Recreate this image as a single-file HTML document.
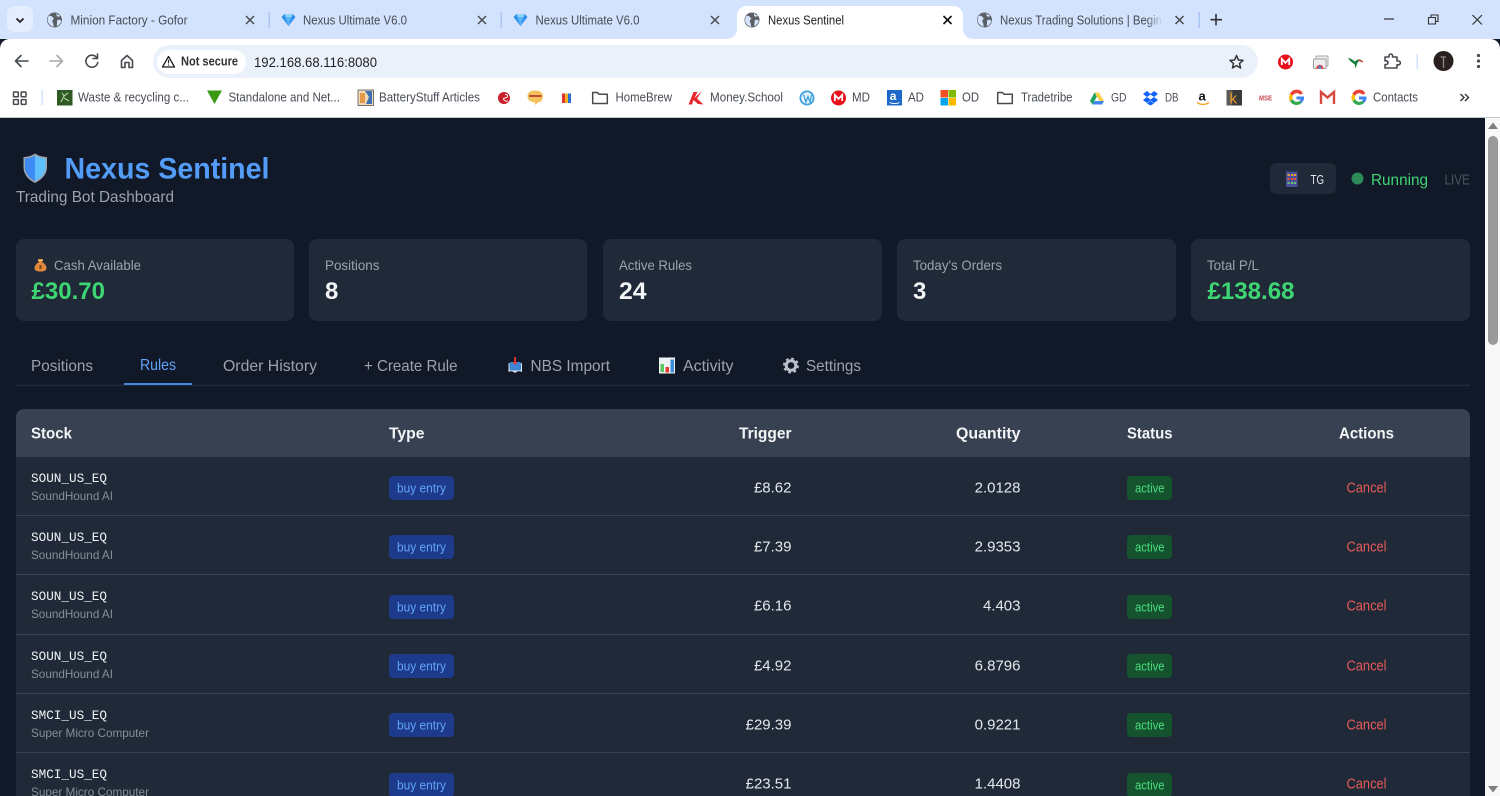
<!DOCTYPE html>
<html lang="en">
<head>
<meta charset="utf-8">
<title>Nexus Sentinel</title>
<style>
html,body{margin:0;padding:0;width:1500px;height:796px;overflow:hidden;background:#111827}
svg{display:block;position:absolute;left:0;top:0}
text{font-family:"Liberation Sans",Arial,sans-serif;white-space:pre}
.t{font-size:12.5px;fill:#474c55}
.b{font-size:12.5px;fill:#474c55}
.sm{font-size:11.5px}
.h{font-size:16px;font-weight:700;fill:#f3f4f6}
.l{font-size:14px;fill:#9ca3af}
.v{font-size:24px;font-weight:700;fill:#f3f4f6}
.g{fill:#3dd673}
.n{font-size:16px;fill:#9ca3af}
.m{font-family:"Liberation Mono",monospace;font-size:13px;fill:#f3f4f6}
.s{font-size:12px;fill:#868e9b}
.bd{font-size:12.5px;fill:#60a5fa}
.ac{font-size:12.5px;fill:#4ade80}
.num{font-size:15px;fill:#e5e7eb}
.c{font-size:15px;fill:#e85a5a}
.i{fill:none;stroke:#474a4f;stroke-width:1.6;stroke-linecap:round;stroke-linejoin:round}
</style>
</head>
<body>
<svg width="1500" height="796" viewBox="0 0 1500 796" xmlns="http://www.w3.org/2000/svg">
<defs>
<linearGradient id="fade" x1="0" x2="1" y1="0" y2="0"><stop offset="0" stop-color="#d3e3fd" stop-opacity="0"/><stop offset="1" stop-color="#d3e3fd"/></linearGradient>
<g id="globe"><circle r="7.500" fill="#5b5f66"/><path d="M-6-4C-3-5-2-3-1-2S-3 0-2 2-1 4-1 7C-4 6-7 3-7 0ZM2-7C3-5 5-5 6-4 4-3 2-3 2-5ZM3 0C5-1 6 0 7 1 6 4 4 6 2 6 3 4 2 2 3 0Z" fill="#d3e3fd"/></g>
<g id="diamond"><path d="M-7-3-4-6H4L7-3 0 6Z" fill="#2f8fea"/><path d="M-3-3H3L0 6Z" fill="#5db6f7"/><path d="M-4-6-3-3H3L4-6Z" fill="#8fd2fb"/></g>
<g id="folder"><path d="M-7.300-5.500H-2.500L-.8-3.700H7.300V5.500H-7.300Z" fill="none" stroke="#474a4f" stroke-width="1.500" stroke-linejoin="round"/></g>
<g id="gg"><path d="M6.500-4.300A7.500 7.500 0 0 0-6.500-3.800L-3.800-1.800A4.500 4.500 0 0 1 3.700-2.700Z" fill="#ea4335"/><path d="M-6.500-3.800A7.500 7.500 0 0 0-6.500 3.800L-3.800 1.800A4.500 4.500 0 0 1-3.800-1.800Z" fill="#fbbc05"/><path d="M-6.500 3.800A7.500 7.500 0 0 0 5.200 5.400L2.800 3.500A4.500 4.500 0 0 1-3.800 1.800Z" fill="#34a853"/><path d="M7.500-1H0V2H4.200A4.500 4.500 0 0 1 2.800 3.500L5.200 5.400A7.500 7.500 0 0 0 7.500-1Z" fill="#4285f4"/></g>
<g id="mega"><circle r="7.500" fill="#e8101a"/><path d="M-3.700 3V-3L0 .8 3.700-3V3" fill="none" stroke="#fff" stroke-width="1.800"/></g>
</defs>

<!-- Tab strip -->
<rect width="1500" height="39" fill="#d3e3fd"/>
<rect x="7" y="6" width="26" height="26" rx="8" fill="#e4edfd"/>
<path d="M16.500 18.500 20 22 23.500 18.500" fill="none" stroke="#1f1f1f" stroke-width="1.700"/>
<use href="#globe" x="54.500" y="20"/>
<text class="t" x="70.500" y="24.500" textLength="117" lengthAdjust="spacingAndGlyphs">Minion Factory - Gofor</text>
<path d="M246 16 254 24M254 16 246 24" stroke="#474a4f" stroke-width="1.500"/>
<rect x="268.500" y="12" width="1.500" height="16" fill="#a9c5f1"/>
<use href="#diamond" x="288.500" y="20"/>
<text class="t" x="303" y="24.500" textLength="104" lengthAdjust="spacingAndGlyphs">Nexus Ultimate V6.0</text>
<path d="M478 16 486 24M486 16 478 24" stroke="#474a4f" stroke-width="1.500"/>
<rect x="500.500" y="12" width="1.500" height="16" fill="#a9c5f1"/>
<use href="#diamond" x="520.500" y="20"/>
<text class="t" x="535.500" y="24.500" textLength="104" lengthAdjust="spacingAndGlyphs">Nexus Ultimate V6.0</text>
<path d="M711 16 719 24M719 16 711 24" stroke="#474a4f" stroke-width="1.500"/>
<path d="M725 39C732 39 737 36 737 28V16C737 10 741 6 747 6H953C959 6 963 10 963 16V28C963 36 968 39 975 39Z" fill="#fff"/>
<use href="#globe" x="752" y="20"/>
<text class="t" style="fill:#1f1f1f" x="768" y="24.500" textLength="76" lengthAdjust="spacingAndGlyphs">Nexus Sentinel</text>
<path d="M943.500 16 951.500 24M951.500 16 943.500 24" stroke="#111" stroke-width="1.600"/>
<use href="#globe" x="984.500" y="20"/>
<text class="t" x="1000" y="24.500" textLength="162" lengthAdjust="spacingAndGlyphs">Nexus Trading Solutions | Begin</text>
<rect x="1146" y="12" width="17" height="16" fill="url(#fade)"/>
<path d="M1175.500 16 1183.500 24M1183.500 16 1175.500 24" stroke="#474a4f" stroke-width="1.500"/>
<rect x="1198.500" y="12" width="1.500" height="16" fill="#a9c5f1"/>
<path d="M1216 14V25.500M1210.500 19.700H1222" stroke="#333" stroke-width="1.600"/>
<path d="M1384 19H1394" stroke="#333" stroke-width="1.200"/>
<path d="M1428.500 17.500H1435.500V24H1428.500ZM1431 17.500V15H1438V21.500H1435.500" fill="none" stroke="#333" stroke-width="1.100"/>
<path d="M1472.500 15 1482 24.500M1482 15 1472.500 24.500" stroke="#333" stroke-width="1.200"/>

<!-- Toolbar -->
<path d="M0 117V49C0 43 4 39 10 39H1490C1496 39 1500 43 1500 49V117Z" fill="#fff"/>
<path d="M28 61H15.500M21 55.500 15.500 61 21 66.500" class="i"/>
<path d="M50 61H62.500M57 55.500 62.500 61 57 66.500" class="i" style="stroke:#a7a9ad"/>
<path d="M97 58A6 6 0 1 0 97.800 62.500M97.500 54V58.500H93" class="i"/>
<path d="M121.500 60.500 127 55.500 132.500 60.500V67.500H129V62.500H125V67.500H121.500Z" class="i"/>
<rect x="153" y="45" width="1105" height="33" rx="16.500" fill="#ebf1fb"/>
<rect x="157" y="50" width="89" height="24" rx="12" fill="#fff"/>
<path d="M168.500 56.500 174.500 67H162.500Z" fill="none" stroke="#1f1f1f" stroke-width="1.300" stroke-linejoin="round"/>
<path d="M168.500 59.800V63.400M168.500 64.500V65.600" stroke="#1f1f1f" stroke-width="1.100"/>
<text x="181" y="65.500" textLength="57" lengthAdjust="spacingAndGlyphs" style="font-size:12.500px;font-weight:700;fill:#303236">Not secure</text>
<text x="254" y="66.800" textLength="123" lengthAdjust="spacingAndGlyphs" style="font-size:14px;fill:#1f1f1f">192.168.68.116:8080</text>
<path d="M1236.500 55.500 1238.400 60 1243 60.400 1239.500 63.400 1240.600 68 1236.500 65.600 1232.400 68 1233.500 63.400 1230 60.400 1234.600 60Z" fill="none" stroke="#333" stroke-width="1.500" stroke-linejoin="round"/>
<use href="#mega" x="1285.500" y="62"/>
<rect x="1316" y="56" width="12" height="10" rx="1" fill="#eee" stroke="#a7a7a7"/>
<rect x="1313.500" y="59" width="12.500" height="9.500" rx="1" fill="#eee" stroke="#9c9c9c"/>
<path d="M1316 68.500A3.800 3.800 0 0 1 1323.600 68.500Z" fill="#ea4335"/><circle cx="1319.800" cy="67" r="1.500" fill="#4285f4"/>
<path d="M1348 57.500C1352 59 1354 61 1355 61.500 1357 59.500 1359 58.500 1362.500 60.500 1359 60.500 1357.500 62 1357 64L1355.500 68.500 1354.500 64C1352 63 1350 61 1348 57.500Z" fill="#15803d"/><path d="M1358 60 1363 62" stroke="#d33" stroke-width="1.200"/>
<path d="M1385 57H1389V55.800A1.800 1.800 0 0 1 1392.600 55.800V57H1397V61H1398.500A1.900 1.900 0 0 1 1398.500 64.800H1397V68H1385V64.500H1386.500A1.900 1.900 0 0 0 1386.500 60.800H1385Z" fill="none" stroke="#474a4f" stroke-width="1.600" stroke-linejoin="round"/>
<rect x="1416.500" y="54" width="1.500" height="15" fill="#d3e3fd"/>
<circle cx="1443.500" cy="61" r="10" fill="#29211f"/>
<path d="M1440.500 57H1446M1443.500 57V68" stroke="#8f8a86" stroke-width="1.300"/>
<circle cx="1478.500" cy="55.500" r="1.600" fill="#474a4f"/><circle cx="1478.500" cy="61" r="1.600" fill="#474a4f"/><circle cx="1478.500" cy="66.500" r="1.600" fill="#474a4f"/>

<!-- Bookmarks -->
<rect y="117" width="1500" height="1" fill="#c4c7c9"/>
<g fill="none" stroke="#474a4f" stroke-width="1.500"><rect x="13.500" y="92" width="4.800" height="4.800" rx=".6"/><rect x="21.200" y="92" width="4.800" height="4.800" rx=".6"/><rect x="13.500" y="99.600" width="4.800" height="4.800" rx=".6"/><rect x="21.200" y="99.600" width="4.800" height="4.800" rx=".6"/></g>
<rect x="41.500" y="90" width="1.500" height="15" fill="#d3e3fd"/>
<rect x="57" y="90" width="15.500" height="15.500" fill="#2e5a23"/><path d="M61 102 64 96 62 93M64 96 68 93M64 98 69 101" stroke="#b8d0a8" stroke-width="1.100" fill="none"/>
<text class="b" x="78" y="101.500" textLength="111" lengthAdjust="spacingAndGlyphs">Waste &amp; recycling c...</text>
<path d="M207 90.500H222L214.500 104Z" fill="#3a9b13"/>
<text class="b" x="228.500" y="101.500" textLength="111.500" lengthAdjust="spacingAndGlyphs">Standalone and Net...</text>
<rect x="358" y="90" width="15.500" height="15.500" fill="#f4d9b6" stroke="#555" stroke-width=".8"/><path d="M365 91 369 97 366 104H372V91Z" fill="#3f6fb5"/><path d="M360 93H365V103H360Z" fill="#e39a4a"/>
<text class="b" x="379" y="101.500" textLength="101" lengthAdjust="spacingAndGlyphs">BatteryStuff Articles</text>
<circle cx="504" cy="98" r="6" fill="#c9202c"/><path d="M505 94.500C509 94 508 98 505 98S504 102 508 101" stroke="#fff" stroke-width="1" fill="none"/>
<path d="M527.500 96C527.500 92 531 90.500 535 90.500S543 92 543 96 541 102 538 102.500L535 105 535 102.500C530 102 527.500 100 527.500 96Z" fill="#f5c25e"/><path d="M529 96H541.500" stroke="#b2402f" stroke-width="1.800"/>
<rect x="562" y="93.500" width="3" height="9.500" fill="#e0352b"/><rect x="565" y="93.500" width="3" height="9.500" fill="#f0b429"/><rect x="568" y="93.500" width="3" height="9.500" fill="#2a70d9"/>
<use href="#folder" x="600" y="98"/>
<text class="b" x="615.500" y="101.500" textLength="56.500" lengthAdjust="spacingAndGlyphs">HomeBrew</text>
<path d="M688.500 104.500 693.500 92 697.500 92 694.500 98 702 91 697 98.500 703.500 104.500 698 104 693.500 100 692 104.500Z" fill="#e6282c"/>
<text class="b" x="710" y="101.500" textLength="73" lengthAdjust="spacingAndGlyphs">Money.School</text>
<circle cx="807" cy="98" r="7.500" fill="#3ba1dc"/><circle cx="807" cy="98" r="5.700" fill="#e8f4fb"/><path d="M803.500 94.500 806 102 808 96.500 810 102 811.500 95" fill="none" stroke="#3ba1dc" stroke-width="1.300"/>
<use href="#mega" x="838.500" y="98"/>
<text class="b" x="852" y="101.500" textLength="18" lengthAdjust="spacingAndGlyphs">MD</text>
<rect x="887" y="90" width="15" height="15.500" fill="#1d68c8"/><text x="889.800" y="100" style="font-size:12px;font-weight:700;fill:#fff">a</text><path d="M889.500 102.500C892 104 897 104 899.500 102.500" stroke="#fff" fill="none"/>
<text class="b" x="908" y="101.500" textLength="16" lengthAdjust="spacingAndGlyphs">AD</text>
<rect x="940.500" y="90" width="7.500" height="7.500" fill="#f25022"/><rect x="948.500" y="90" width="7.500" height="7.500" fill="#7fba00"/><rect x="940.500" y="98" width="7.500" height="7.500" fill="#00a4ef"/><rect x="948.500" y="98" width="7.500" height="7.500" fill="#ffb900"/>
<text class="b" x="962" y="101.500" textLength="17" lengthAdjust="spacingAndGlyphs">OD</text>
<use href="#folder" x="1005" y="98"/>
<text class="b" x="1021" y="101.500" textLength="51.500" lengthAdjust="spacingAndGlyphs">Tradetribe</text>
<path d="M1090 101 1094.500 92.500H1099L1094.500 101 1092.500 104.500Z" fill="#1fa463"/><path d="M1094.500 92.500H1099L1104 101H1099.500Z" fill="#ffd04b"/><path d="M1092.500 104.500 1094.500 101H1104L1102 104.500Z" fill="#4285f4"/>
<text class="b sm" x="1111" y="101.500" textLength="15.500" lengthAdjust="spacingAndGlyphs">GD</text>
<path d="M1147 91 1143 94 1147 97 1143 100 1147 103 1150.500 100.500 1154 103 1158 100 1154 97 1158 94 1154 91 1150.500 94 Z" fill="#0f62fe"/><path d="M1147 97 1150.500 94.500 1154 97 1150.500 99.500Z" fill="#fff"/><path d="M1147 103.500 1150.500 101 1154 103.500 1150.500 105.500Z" fill="#0f62fe"/>
<text class="b sm" x="1165" y="101.500" textLength="13.500" lengthAdjust="spacingAndGlyphs">DB</text>
<text x="1198.500" y="100.500" style="font-size:13px;font-weight:700;fill:#111">a</text><path d="M1197 102.500C1200 105 1206 105 1209 102.500" stroke="#f79c1c" stroke-width="1.300" fill="none"/>
<rect x="1226.500" y="90" width="15.500" height="15.500" fill="#3a3a3a"/><rect x="1226.500" y="90" width="6" height="15.500" fill="#5a5a5a"/><text x="1229.500" y="103.500" style="font-size:15px;fill:#f19a24">k</text>
<text x="1259" y="100.500" textLength="13" lengthAdjust="spacingAndGlyphs" style="font-size:7px;font-weight:700;fill:#c84a52">MSE</text>
<use href="#gg" x="1296.500" y="97.500"/>
<path d="M1321 104V92L1327.500 97.500 1334 92V104" fill="none" stroke="#d8483c" stroke-width="2.400"/>
<use href="#gg" x="1359" y="97.500"/>
<text class="b" x="1373" y="101.500" textLength="45" lengthAdjust="spacingAndGlyphs">Contacts</text>
<path d="M1460.500 94 1464 97.500 1460.500 101M1465 94 1468.500 97.500 1465 101" fill="none" stroke="#333" stroke-width="1.400"/>

<!-- Page -->
<rect y="118" width="1485" height="678" fill="#111827"/>
<rect x="1485" y="118" width="15" height="678" fill="#f8f8f8"/>
<rect x="1488" y="136" width="10" height="209" rx="5" fill="#9a9a9a"/>
<path d="M1493 122.500 1498 129H1488Z" fill="#7f7f7f"/>
<path d="M1493 792.500 1498 786H1488Z" fill="#7f7f7f"/>

<!-- Header -->
<path d="M35 153.500C39 156 43 157 47 157V167C47 175 41 180 35 183 29 180 23.500 175 23.500 167V157C27.500 157 31 156 35 153.500Z" fill="#9aa3ae"/>
<path d="M35 155.500V181C30 178.500 25 174 25 167V158.500C28.500 158.200 32 157.500 35 155.500Z" fill="#3d8bf3"/>
<path d="M35 155.500V181C40 178.500 45.500 174 45.500 167V158.500C42 158.200 38 157.500 35 155.500Z" fill="#5ec0fb"/>
<text x="64.500" y="178.500" textLength="205" lengthAdjust="spacingAndGlyphs" style="font-size:30px;font-weight:700;fill:#539df8">Nexus Sentinel</text>
<text x="16" y="202" textLength="158" lengthAdjust="spacingAndGlyphs" style="font-size:16px;fill:#9ca3af">Trading Bot Dashboard</text>

<rect x="1270" y="163" width="66" height="31" rx="6" fill="#1f2937"/>
<rect x="1286" y="171.500" width="11.500" height="15.500" fill="#4a4f9a"/>
<g fill="#f0a030"><rect x="1287.500" y="174" width="2.200" height="2"/><rect x="1291" y="174" width="2.200" height="2"/><rect x="1294" y="174" width="2.200" height="2"/></g>
<g fill="#e8503a"><rect x="1287.500" y="178" width="2.200" height="2"/><rect x="1291" y="178" width="2.200" height="2"/><rect x="1294" y="178" width="2.200" height="2"/></g>
<g fill="#6fbf73"><rect x="1287.500" y="182" width="2.200" height="2"/><rect x="1291" y="182" width="2.200" height="2"/><rect x="1294" y="182" width="2.200" height="2"/></g>
<text x="1310.500" y="184" textLength="13.500" lengthAdjust="spacingAndGlyphs" style="font-size:12.500px;fill:#e5e7eb">TG</text>
<circle cx="1357.500" cy="178.500" r="6" fill="#2b8a57"/>
<text x="1371" y="185" textLength="57" lengthAdjust="spacingAndGlyphs" style="font-size:16px;fill:#3dd673">Running</text>
<text x="1444.500" y="184.500" textLength="25.500" lengthAdjust="spacingAndGlyphs" style="font-size:15px;fill:#4b5563">LIVE</text>

<!-- Stat cards -->
<rect x="16" y="239" width="278" height="82" rx="8" fill="#1f2937"/>
<rect x="309" y="239" width="278" height="82" rx="8" fill="#1f2937"/>
<rect x="603" y="239" width="279" height="82" rx="8" fill="#1f2937"/>
<rect x="897" y="239" width="279" height="82" rx="8" fill="#1f2937"/>
<rect x="1191" y="239" width="279" height="82" rx="8" fill="#1f2937"/>
<path d="M38 259H43L41.800 262C45 263.500 46.500 266 46.500 268.200 46.500 270.500 44 271.500 40.500 271.500S34.500 270.500 34.500 268.200C34.500 266 36 263.500 39.200 262Z" fill="#e0893c"/><path d="M38 260.500H43" stroke="#f5c15c" stroke-width="1.500"/><rect x="39.500" y="265" width="2" height="4" fill="#7a4510"/>
<text class="l" x="54" y="270" textLength="87" lengthAdjust="spacingAndGlyphs">Cash Available</text>
<text class="v g" x="31.500" y="299" textLength="73.500" lengthAdjust="spacingAndGlyphs">£30.70</text>
<text class="l" x="325" y="270" textLength="54.500" lengthAdjust="spacingAndGlyphs">Positions</text>
<text class="v" x="325" y="299">8</text>
<text class="l" x="619" y="270" textLength="73" lengthAdjust="spacingAndGlyphs">Active Rules</text>
<text class="v" x="619" y="299" textLength="27.500" lengthAdjust="spacingAndGlyphs">24</text>
<text class="l" x="913" y="270" textLength="89" lengthAdjust="spacingAndGlyphs">Today's Orders</text>
<text class="v" x="913" y="299">3</text>
<text class="l" x="1207" y="270" textLength="52" lengthAdjust="spacingAndGlyphs">Total P/L</text>
<text class="v g" x="1207.500" y="299" textLength="87" lengthAdjust="spacingAndGlyphs">£138.68</text>

<!-- Nav tabs -->
<rect x="16" y="384.500" width="1454" height="1.500" fill="#1f2937"/>
<text class="n" x="31" y="371" textLength="62" lengthAdjust="spacingAndGlyphs">Positions</text>
<text class="n" style="fill:#60a5fa" x="140" y="370" textLength="36" lengthAdjust="spacingAndGlyphs">Rules</text>
<rect x="124" y="383" width="68" height="2" fill="#4a88dc"/>
<text class="n" x="223" y="371" textLength="94" lengthAdjust="spacingAndGlyphs">Order History</text>
<text class="n" x="364" y="371" textLength="93.500" lengthAdjust="spacingAndGlyphs">+ Create Rule</text>
<path d="M508.500 363 515 366 522 363V372C519 370.500 517 371.500 515 373 513 371.500 511 370.500 508.500 372Z" fill="#e0e6ee"/><rect x="509.500" y="362" width="11.500" height="8.500" rx="1.500" fill="#3d86d6"/><path d="M515 357V363" stroke="#ea3a3a" stroke-width="1.800"/><path d="M512.500 362H517.500L515 365Z" fill="#ea3a3a"/>
<text class="n" x="530.500" y="371" textLength="79.500" lengthAdjust="spacingAndGlyphs">NBS Import</text>
<rect x="659" y="357.500" width="16" height="16" fill="#eef1f4"/><rect x="660.500" y="364" width="3.500" height="8" fill="#57c860"/><rect x="665.500" y="367" width="3.500" height="5.500" fill="#e3392f"/><rect x="670.500" y="359.500" width="3.500" height="13" fill="#3b8bdc"/>
<text class="n" x="683" y="371" textLength="50.500" lengthAdjust="spacingAndGlyphs">Activity</text>
<circle cx="791" cy="365.500" r="4.800" fill="none" stroke="#b9c0c9" stroke-width="3"/><circle cx="791" cy="365.500" r="7" fill="none" stroke="#b9c0c9" stroke-width="2" stroke-dasharray="2.700 2.800"/>
<text class="n" x="806" y="371" textLength="55" lengthAdjust="spacingAndGlyphs">Settings</text>

<!-- Table -->
<rect x="16" y="409" width="1454" height="400" rx="8" fill="#1f2937"/>
<path d="M16 457V417A8 8 0 0 1 24 409H1462A8 8 0 0 1 1470 417V457Z" fill="#374151"/>
<text class="h" x="31" y="438.500" textLength="41" lengthAdjust="spacingAndGlyphs">Stock</text>
<text class="h" x="389" y="438.500" textLength="35.500" lengthAdjust="spacingAndGlyphs">Type</text>
<text class="h" x="739" y="438.500" textLength="52.500" lengthAdjust="spacingAndGlyphs">Trigger</text>
<text class="h" x="956" y="438.500" textLength="64.500" lengthAdjust="spacingAndGlyphs">Quantity</text>
<text class="h" x="1127" y="438.500" textLength="45.500" lengthAdjust="spacingAndGlyphs">Status</text>
<text class="h" x="1339" y="438.500" textLength="55" lengthAdjust="spacingAndGlyphs">Actions</text>
<g fill="#374151"><rect x="16" y="515" width="1454" height="1"/><rect x="16" y="574" width="1454" height="1"/><rect x="16" y="634" width="1454" height="1"/><rect x="16" y="693" width="1454" height="1"/><rect x="16" y="752" width="1454" height="1"/></g>

<!-- Row 1 -->
<g>
<text class="m" x="31" y="482" textLength="76" lengthAdjust="spacingAndGlyphs">SOUN_US_EQ</text>
<text class="s" x="31" y="500" textLength="82" lengthAdjust="spacingAndGlyphs">SoundHound AI</text>
<rect x="389" y="476" width="65" height="24" rx="4" fill="#1e3a8a"/>
<text class="bd" x="397" y="492.500" textLength="49" lengthAdjust="spacingAndGlyphs">buy entry</text>
<text class="num" x="791.500" y="492.500" text-anchor="end">£8.62</text>
<text class="num" x="1020.500" y="492.500" text-anchor="end">2.0128</text>
<rect x="1127" y="476" width="45" height="24" rx="4" fill="#14532d"/>
<text class="ac" x="1135" y="492.500" textLength="29.500" lengthAdjust="spacingAndGlyphs">active</text>
<text class="c" x="1346.500" y="492.500" textLength="40" lengthAdjust="spacingAndGlyphs">Cancel</text>
</g>
<!-- Row 2 -->
<g transform="translate(0,59)">
<text class="m" x="31" y="482" textLength="76" lengthAdjust="spacingAndGlyphs">SOUN_US_EQ</text>
<text class="s" x="31" y="500" textLength="82" lengthAdjust="spacingAndGlyphs">SoundHound AI</text>
<rect x="389" y="476" width="65" height="24" rx="4" fill="#1e3a8a"/>
<text class="bd" x="397" y="492.500" textLength="49" lengthAdjust="spacingAndGlyphs">buy entry</text>
<text class="num" x="791.500" y="492.500" text-anchor="end">£7.39</text>
<text class="num" x="1020.500" y="492.500" text-anchor="end">2.9353</text>
<rect x="1127" y="476" width="45" height="24" rx="4" fill="#14532d"/>
<text class="ac" x="1135" y="492.500" textLength="29.500" lengthAdjust="spacingAndGlyphs">active</text>
<text class="c" x="1346.500" y="492.500" textLength="40" lengthAdjust="spacingAndGlyphs">Cancel</text>
</g>
<!-- Row 3 -->
<g transform="translate(0,118)">
<text class="m" x="31" y="482" textLength="76" lengthAdjust="spacingAndGlyphs">SOUN_US_EQ</text>
<text class="s" x="31" y="500" textLength="82" lengthAdjust="spacingAndGlyphs">SoundHound AI</text>
<rect x="389" y="477" width="65" height="24" rx="4" fill="#1e3a8a"/>
<text class="bd" x="397" y="493.500" textLength="49" lengthAdjust="spacingAndGlyphs">buy entry</text>
<text class="num" x="791.500" y="492.500" text-anchor="end">£6.16</text>
<text class="num" x="1020.500" y="492.500" text-anchor="end">4.403</text>
<rect x="1127" y="477" width="45" height="24" rx="4" fill="#14532d"/>
<text class="ac" x="1135" y="493.500" textLength="29.500" lengthAdjust="spacingAndGlyphs">active</text>
<text class="c" x="1346.500" y="492.500" textLength="40" lengthAdjust="spacingAndGlyphs">Cancel</text>
</g>
<!-- Row 4 -->
<g transform="translate(0,178)">
<text class="m" x="31" y="482" textLength="76" lengthAdjust="spacingAndGlyphs">SOUN_US_EQ</text>
<text class="s" x="31" y="500" textLength="82" lengthAdjust="spacingAndGlyphs">SoundHound AI</text>
<rect x="389" y="476" width="65" height="24" rx="4" fill="#1e3a8a"/>
<text class="bd" x="397" y="492.500" textLength="49" lengthAdjust="spacingAndGlyphs">buy entry</text>
<text class="num" x="791.500" y="492.500" text-anchor="end">£4.92</text>
<text class="num" x="1020.500" y="492.500" text-anchor="end">6.8796</text>
<rect x="1127" y="476" width="45" height="24" rx="4" fill="#14532d"/>
<text class="ac" x="1135" y="492.500" textLength="29.500" lengthAdjust="spacingAndGlyphs">active</text>
<text class="c" x="1346.500" y="492.500" textLength="40" lengthAdjust="spacingAndGlyphs">Cancel</text>
</g>
<!-- Row 5 -->
<g transform="translate(0,237)">
<text class="m" x="31" y="482" textLength="76" lengthAdjust="spacingAndGlyphs">SMCI_US_EQ</text>
<text class="s" x="31" y="500" textLength="118" lengthAdjust="spacingAndGlyphs">Super Micro Computer</text>
<rect x="389" y="476" width="65" height="24" rx="4" fill="#1e3a8a"/>
<text class="bd" x="397" y="492.500" textLength="49" lengthAdjust="spacingAndGlyphs">buy entry</text>
<text class="num" x="791.500" y="492.500" text-anchor="end">£29.39</text>
<text class="num" x="1020.500" y="492.500" text-anchor="end">0.9221</text>
<rect x="1127" y="476" width="45" height="24" rx="4" fill="#14532d"/>
<text class="ac" x="1135" y="492.500" textLength="29.500" lengthAdjust="spacingAndGlyphs">active</text>
<text class="c" x="1346.500" y="492.500" textLength="40" lengthAdjust="spacingAndGlyphs">Cancel</text>
</g>
<!-- Row 6 -->
<g transform="translate(0,296)">
<text class="m" x="31" y="482" textLength="76" lengthAdjust="spacingAndGlyphs">SMCI_US_EQ</text>
<text class="s" x="31" y="500" textLength="118" lengthAdjust="spacingAndGlyphs">Super Micro Computer</text>
<rect x="389" y="477" width="65" height="24" rx="4" fill="#1e3a8a"/>
<text class="bd" x="397" y="493.500" textLength="49" lengthAdjust="spacingAndGlyphs">buy entry</text>
<text class="num" x="791.500" y="492.500" text-anchor="end">£23.51</text>
<text class="num" x="1020.500" y="492.500" text-anchor="end">1.4408</text>
<rect x="1127" y="477" width="45" height="24" rx="4" fill="#14532d"/>
<text class="ac" x="1135" y="493.500" textLength="29.500" lengthAdjust="spacingAndGlyphs">active</text>
<text class="c" x="1346.500" y="492.500" textLength="40" lengthAdjust="spacingAndGlyphs">Cancel</text>
</g>
</svg>
</body>
</html>
